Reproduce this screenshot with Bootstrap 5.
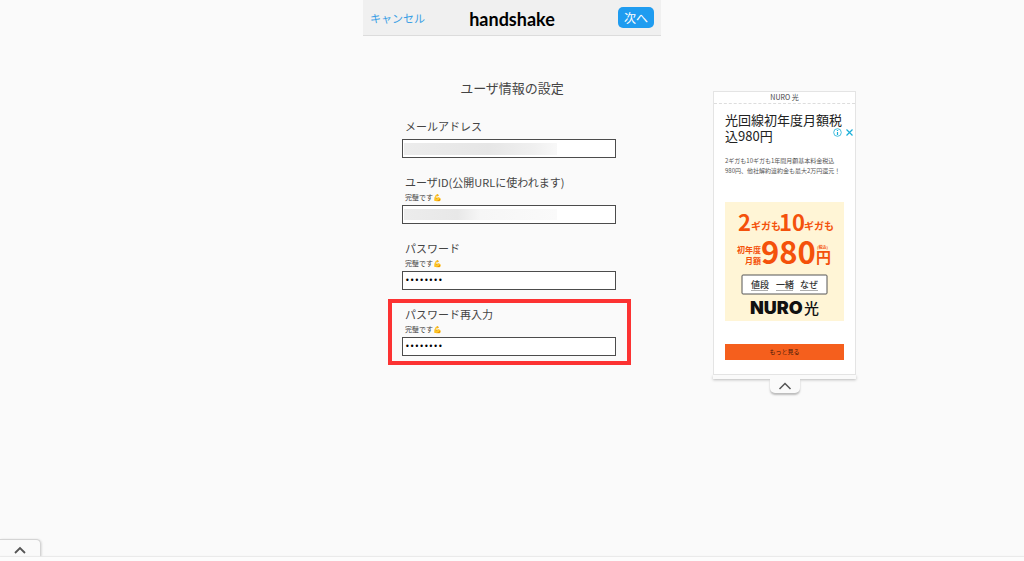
<!DOCTYPE html>
<html lang="ja">
<head>
<meta charset="utf-8">
<meta name="viewport" content="width=device-width, initial-scale=1">
<title>handshake</title>
<link href="https://cdn.jsdelivr.net/npm/bootstrap@5.3.0/dist/css/bootstrap.min.css" rel="stylesheet">
<style>
body { background: #fafafa; color: #444; font-family: "Noto Sans CJK JP", sans-serif; font-size: 11px; line-height: 18px; }
.layout { display: grid; grid-template-columns: 1fr 298px 1fr; }
.topbar { display: grid; grid-template-columns: 1fr auto 1fr; height: 36px; background: #f0f0f0; border-bottom: 1px solid #dcdcdc; padding: 0 7px; }
.cancel-link { color: #3a9fe5; }
.brand-name { font: 700 18px/24px Lato, sans-serif; color: #000; padding-top: 2px; }
.next-btn { background: #1f9cf0; color: #fff; font-size: 12px; line-height: 21px; padding: 0 6px; border-radius: 5px; }
.form-title { font-size: 13px; line-height: 20px; margin: 42px 0 19px; font-weight: 400; }
.signup { margin: 0 45px 0 39px; }
.field { margin-bottom: 15px; position: relative; }
.field label { display: block; padding-left: 3px; }
.hint { font-size: 7px; line-height: 12px; padding-left: 3px; margin-bottom: 2px; }
.entry { height: 19px; border: 1px solid #4c4c4c; border-radius: 0; background: #fff; padding: 0 2px; color: #000; font-size: 11px; line-height: 17px; }
.entry[type=password] { font-family: "DejaVu Sans", sans-serif; font-size: 8px; }
.entry-email { margin-top: 4px; background: linear-gradient(90deg, #ececec, #e6e6e6 55%, #f0f0f0 85%, #f8f8f8) 1px 3px / 153px 12px no-repeat #fff; }
.entry-id { background: linear-gradient(90deg, #ececec, #e8e8e8 35%, #f6f6f6 50%, #fafafa) 1px 3px / 153px 11px no-repeat #fff; }
.highlighted::after { content: ""; position: absolute; inset: -6px -15px -9px -14px; border: 4px solid #fc3232; pointer-events: none; }
.promo { width: 143px; margin: 91px 0 0 52px; }
.promo-box { background: #fff; border: 1px solid #e4e4e4; }
.promo-brand { font-size: 7px; line-height: 11px; border-bottom: 1px dashed #ddd; }
.promo-body { padding: 8px 11px 14px; }
.promo-title { font-size: 13px; line-height: 16px; color: #222; margin: 0 0 12px; font-weight: 400; white-space: nowrap; }
.promo-text { font-size: 6px; line-height: 10px; color: #555; margin: 0 0 26px; white-space: nowrap; }
.promo-btn { background: #f55f1d; color: #3b1608; font-size: 6px; line-height: 16px; border-radius: 0; padding: 0; margin-top: 23px; }
.promo-icons { top: 36px; right: 1px; gap: 3px; }
.promo-foot { height: 4px; background: #fafafa; box-shadow: 0 1px 3px #bbb; }
.promo-tab { width: 30px; height: 14px; border: 0; padding: 0; background: #fafafa; border-radius: 0 0 5px 5px; box-shadow: 0 2px 2px #bbb; position: relative; }
.page-tab { width: 41px; height: 18px; border: 1px solid #d4d4d4; border-width: 1px 1px 0 0; border-radius: 0 5px 0 0; background: #fafafa; padding: 2px 0 0; box-shadow: 1px 0 2px #ddd; }
.page-foot { height: 4px; background: #fcfcfc; box-shadow: 0 -1px 1px #e8e8e8; }
</style>
</head>
<body class="d-flex flex-column min-vh-100">
<div class="layout">
  <main style="grid-column:2">
    <header class="topbar align-items-center">
      <a href="#" class="cancel-link text-decoration-none">キャンセル</a>
      <span class="brand-name">handshake</span>
      <button type="button" class="btn next-btn border-0 ms-auto">次へ</button>
    </header>
    <h1 class="form-title text-center">ユーザ情報の設定</h1>
    <form class="signup">
      <div class="field">
        <label for="email">メールアドレス</label>
        <input id="email" type="email" class="entry entry-email d-block w-100">
      </div>
      <div class="field">
        <label for="uid">ユーザID(公開URLに使われます)</label>
        <div class="hint">完璧です💪</div>
        <input id="uid" type="text" class="entry entry-id d-block w-100">
      </div>
      <div class="field">
        <label for="pw">パスワード</label>
        <div class="hint">完璧です💪</div>
        <input id="pw" type="password" value="abcdefgh" class="entry d-block w-100">
      </div>
      <div class="field highlighted">
        <label for="pw2">パスワード再入力</label>
        <div class="hint">完璧です💪</div>
        <input id="pw2" type="password" value="abcdefgh" class="entry d-block w-100">
      </div>
    </form>
  </main>
  <aside class="promo">
    <div class="promo-box position-relative">
      <div class="promo-brand text-center">NURO 光</div>
      <div class="promo-icons position-absolute d-flex">
        <svg width="9" height="9" viewBox="0 0 9 9" fill="none" stroke="#19aed8"><circle cx="4.500" cy="4.500" r="3.800" stroke-width=".8"/><path d="M4.500 4v3M4.500 2v1" stroke-width="1.200"/></svg>
        <svg width="9" height="9" viewBox="0 0 9 9" fill="none" stroke="#19aed8" stroke-width="1.200"><path d="M1.500 1.500l6 6M7.500 1.500l-6 6"/></svg>
      </div>
      <div class="promo-body">
        <h2 class="promo-title">光回線初年度月額税<br>込980円</h2>
        <p class="promo-text">2ギガも10ギガも1年間月額基本料金税込<br>980円、他社解約違約金も最大2万円還元！</p>
        <svg class="d-block w-100" viewBox="0 0 119 119" font-family="Noto Sans CJK JP, sans-serif" font-weight="700" fill="#f4510b">
          <rect width="119" height="119" fill="#fff5d6"/>
          <text x="13" y="29" font-size="22">2</text>
          <text x="54" y="29" font-size="22">10</text>
          <text x="36" y="62" font-size="31">980</text>
          <text x="26" y="28" font-size="10">ギガも</text>
          <text x="79" y="28" font-size="10">ギガも</text>
          <text x="12" y="51" font-size="8">初年度</text>
          <text x="20" y="62" font-size="8">月額</text>
          <text x="91" y="61" font-size="15">円</text>
          <text x="92" y="47" font-size="4">(税込)</text>
          <rect x="17" y="73" width="85" height="19" rx="1" fill="#fff" stroke="#555"/>
          <g font-size="9" fill="#333" font-weight="500">
            <text x="26" y="86">値段</text><text x="51" y="86">一緒</text><text x="75" y="86">なぜ</text>
          </g>
          <path d="M26 88.500h17M51 88.500h17M75 88.500h18" stroke="#777" stroke-width=".6"/>
          <text x="25" y="112" font-size="18" font-weight="900" font-family="Inter, sans-serif" fill="#111">NURO</text>
          <text x="79" y="112" font-size="15" font-weight="500" fill="#111">光</text>
        </svg>
        <button type="button" class="btn promo-btn border-0 d-block w-100">もっと見る</button>
      </div>
    </div>
    <div class="promo-foot"></div>
    <button type="button" class="promo-tab d-flex align-items-center justify-content-center mx-auto" aria-label="閉じる">
      <svg width="14" height="8" viewBox="0 0 14 8" fill="none" stroke="#555" stroke-width="1.500"><path d="M1.500 7L7 1.500 12.500 7"/></svg>
    </button>
  </aside>
</div>
<footer class="mt-auto">
  <button type="button" class="page-tab d-flex align-items-center justify-content-center" aria-label="開く">
    <svg width="12" height="8" viewBox="0 0 12 8" fill="none" stroke="#555" stroke-width="1.800"><path d="M1 7l5-5 5 5"/></svg>
  </button>
  <div class="page-foot"></div>
</footer>
<script src="https://cdn.jsdelivr.net/npm/bootstrap@5.3.0/dist/js/bootstrap.bundle.min.js"></script>
</body>
</html>
